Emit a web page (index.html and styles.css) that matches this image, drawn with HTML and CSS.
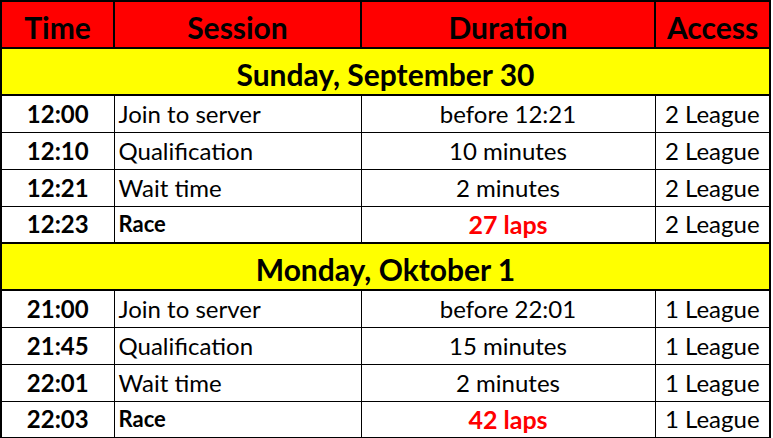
FILE: index.html
```html
<!DOCTYPE html>
<html lang="en">
<head>
<meta charset="utf-8">
<title>Race schedule</title>
<link rel="stylesheet" href="styles.css">
</head>
<body>
<table class="schedule">
  <colgroup>
    <col class="c-time">
    <col class="c-session">
    <col class="c-dur">
    <col class="c-access">
  </colgroup>
  <thead>
    <tr class="head"><th>Time</th><th>Session</th><th>Duration</th><th>Access</th></tr>
  </thead>
  <tbody>
    <tr class="day"><th colspan="4">Sunday, September 30</th></tr>
    <tr><td class="time">12:00</td><td class="session">Join to server</td><td class="dur">before 12:21</td><td class="access">2 League</td></tr>
    <tr><td class="time">12:10</td><td class="session">Qualification</td><td class="dur">10 minutes</td><td class="access">2 League</td></tr>
    <tr><td class="time">12:21</td><td class="session">Wait time</td><td class="dur">2 minutes</td><td class="access">2 League</td></tr>
    <tr><td class="time">12:23</td><td class="session race">Race</td><td class="dur laps">27 laps</td><td class="access">2 League</td></tr>
    <tr class="day"><th colspan="4">Monday, Oktober 1</th></tr>
    <tr><td class="time">21:00</td><td class="session">Join to server</td><td class="dur">before 22:01</td><td class="access">1 League</td></tr>
    <tr><td class="time">21:45</td><td class="session">Qualification</td><td class="dur">15 minutes</td><td class="access">1 League</td></tr>
    <tr><td class="time">22:01</td><td class="session">Wait time</td><td class="dur">2 minutes</td><td class="access">1 League</td></tr>
    <tr><td class="time">22:03</td><td class="session race">Race</td><td class="dur laps">42 laps</td><td class="access">1 League</td></tr>
  </tbody>
</table>
</body>
</html>
```
FILE: styles.css
```css
html, body {
  margin: 0;
  padding: 0;
  background: #fff;
}

body {
  font-family: Lato, "Liberation Sans", sans-serif;
  color: #000;
}

.schedule {
  border-collapse: collapse;
  table-layout: fixed;
  width: 771px;
  border: 2px solid #000;
}

.c-time { width: 113px; }
.c-session { width: 247px; }
.c-dur { width: 294px; }
.c-access { width: 115px; }

.schedule td,
.schedule th {
  border: 1px solid #000;
  padding: 0;
  white-space: nowrap;
  overflow: hidden;
  vertical-align: bottom;
}

.head th,
.day th {
  height: 41px;
  border: 2px solid #000;
  font-size: 30px;
  font-weight: 700;
  line-height: 32px;
  padding-bottom: 4px;
  text-align: center;
}

.head th {
  background: #ff0000;
}

.day th {
  background: #ffff00;
}

.schedule tbody tr:not(.day) {
  height: 37px;
}

.schedule td {
  font-size: 24px;
  line-height: 28px;
  padding-bottom: 4px;
}

.time {
  font-weight: 700;
  text-align: center;
}

.session {
  text-align: left;
  padding-left: 4px !important;
}

.dur,
.access {
  text-align: center;
}

.race {
  font-size: 22px !important;
  font-weight: 700;
}

.laps {
  color: #ff0000;
  font-weight: 700;
  font-size: 25px !important;
}
```
